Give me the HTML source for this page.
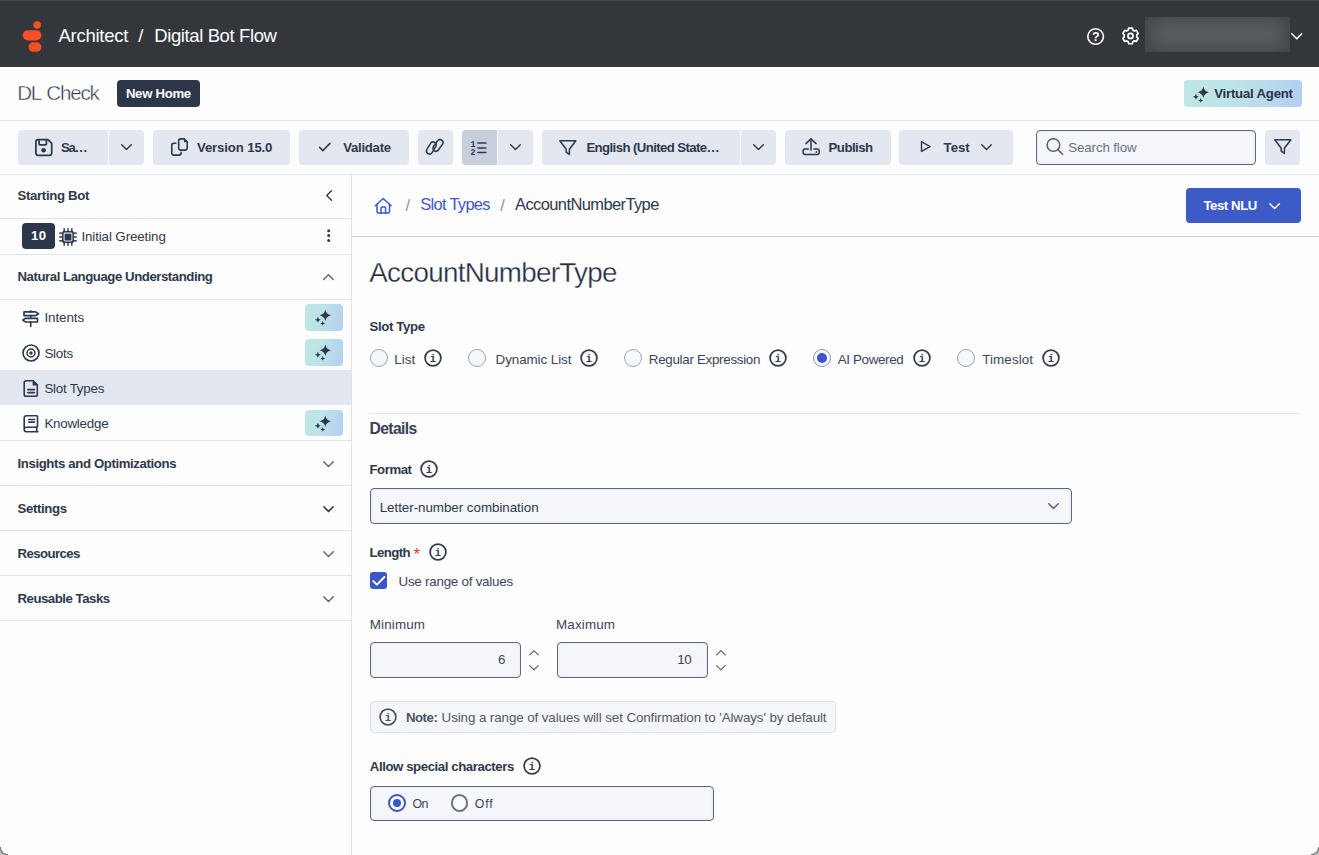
<!DOCTYPE html>
<html lang="en">
<head>
<meta charset="utf-8">
<title>Architect / Digital Bot Flow</title>
<style>
*{box-sizing:border-box;margin:0;padding:0}
html,body{width:1319px;height:855px;overflow:hidden;background:#fdfdfd}
body{font-family:"Liberation Sans",sans-serif;color:#2e394c;font-size:13px;position:relative}
.abs{position:absolute}
.t{position:absolute;white-space:pre;line-height:1}
svg{position:absolute;overflow:visible}
.s{fill:none;stroke:#2e394c;stroke-width:1.5;stroke-linecap:round;stroke-linejoin:round}
.btn{position:absolute;top:130px;height:35px;background:#e3e7f0}
.hl{position:absolute;height:1px;background:#dfe2ed;left:0}
.ai{position:absolute;left:305px;width:38px;height:27px;border-radius:4px;background:linear-gradient(105deg,#bfe7e4 0%,#bde4e6 40%,#b4cef3 100%)}
.radio{position:absolute;width:18px;height:18px;border-radius:50%;border:1px solid #97a3bd;background:#f7f8fa}
.inp{position:absolute;border:1px solid #5d6880;border-radius:4px;background:#f5f6f9;box-shadow:inset 0 0 3px rgba(60,70,100,.10)}
</style>
</head>
<body>
<div class="abs" style="left:0;top:0;width:1319px;height:67px;background:#33373c;border-top:1px solid #484a4a"></div>
<svg style="left:22px;top:20px" width="21" height="33" viewBox="0 0 21 33" ><circle cx="15.2" cy="4.9" r="3.75" fill="#f75028"/><rect x="0.7" y="10.2" width="18.7" height="10.2" rx="5.1" fill="#f75028"/><rect x="6.5" y="22.3" width="12.9" height="9.5" rx="4.75" fill="#f75028"/></svg>
<span class="t" style="left:58.4px;top:27.0px;font-size:18.54px;color:#fdfdfd;letter-spacing:-0.27px">Architect</span>
<span class="t" style="left:138.2px;top:27.0px;font-size:18.54px;color:#fdfdfd;letter-spacing:0.90px">/</span>
<span class="t" style="left:154.2px;top:27.0px;font-size:18.54px;color:#fdfdfd;letter-spacing:-0.40px">Digital Bot Flow</span>
<svg style="left:1086px;top:27px" width="20" height="20" viewBox="0 0 20 20" ><circle cx="9.6" cy="9.5" r="7.8" fill="none" stroke="#fff" stroke-width="1.6"/><text x="9.7" y="14" text-anchor="middle" font-family="Liberation Sans,sans-serif" font-weight="bold" font-size="12.5" fill="#fff">?</text></svg>
<svg style="left:1120px;top:25px" width="22" height="22" viewBox="0 0 22 22" ><path d="M8.69,3.06 L12.31,3.06 L12.78,4.97 L14.50,5.97 L16.39,5.41 L18.20,8.55 L16.77,9.91 L16.77,11.89 L18.20,13.25 L16.39,16.39 L14.50,15.83 L12.78,16.83 L12.31,18.74 L8.69,18.74 L8.22,16.83 L6.50,15.83 L4.61,16.39 L2.80,13.25 L4.23,11.89 L4.23,9.91 L2.80,8.55 L4.61,5.41 L6.50,5.97 L8.22,4.97Z" fill="none" stroke="#fff" stroke-width="1.7" stroke-linejoin="round"/><circle cx="10.5" cy="10.9" r="2.55" fill="none" stroke="#fff" stroke-width="1.7"/></svg>
<div class="abs" style="left:1145px;top:17px;width:145px;height:35px;overflow:hidden;background:#414448"><div class="abs" style="left:6px;top:3px;width:133px;height:29px;background:#585b5f;filter:blur(8px)"></div></div>
<svg style="left:1290.75px;top:32.7px" width="11.5" height="6.6" viewBox="0 0 11.5 6.6" ><polyline points="0.75,0.75 5.75,5.85 10.75,0.75" fill="none" stroke="#fff" stroke-width="1.5" stroke-linecap="round" stroke-linejoin="round"/></svg>
<div class="hl" style="top:120px;width:1319px"></div>
<span class="t" style="left:17.2px;top:83.0px;font-size:20.6px;color:#2c374f;letter-spacing:-1.22px;word-spacing:1.5px;-webkit-text-stroke:0.42px #fdfdfd">DL Check</span>
<div class="abs" style="left:117px;top:80px;width:83px;height:27px;border-radius:4px;background:#2e364a"></div>
<span class="t" style="left:125.9px;top:87.0px;font-size:13.19px;font-weight:bold;color:#ffffff;letter-spacing:-0.30px">New Home</span>
<div class="abs" style="left:1184px;top:80px;width:118px;height:27px;border-radius:4px;background:linear-gradient(100deg,#bfe7e4 0%,#bde4e6 40%,#b4cef3 100%)"></div>
<svg style="left:1192.5px;top:85px" width="18" height="18" viewBox="0 0 18 18" ><path d="M10.3,1.5 Q11.1874,6.412599999999999 16.1,7.3 Q11.1874,8.1874 10.3,13.1 Q9.412600000000001,8.1874 4.500000000000001,7.3 Q9.412600000000001,6.412599999999999 10.3,1.5ZM2.9,8.8 Q3.2239999999999998,11.476 5.9,11.8 Q3.2239999999999998,12.124 2.9,14.8 Q2.576,12.124 -0.10000000000000009,11.8 Q2.576,11.476 2.9,8.8ZM7.7,13.0 Q7.916,15.184000000000001 10.1,15.4 Q7.916,15.616 7.7,17.8 Q7.484,15.616 5.300000000000001,15.4 Q7.484,15.184000000000001 7.7,13.0Z" fill="#2f374b"/></svg>
<span class="t" style="left:1214.2px;top:87.0px;font-size:13.19px;font-weight:bold;color:#2c3348;letter-spacing:-0.21px">Virtual Agent</span>
<div class="hl" style="top:174px;width:1319px"></div>
<div class="btn" style="left:18px;width:90px;border-radius:4px 0 0 4px;background:#e3e7f0"></div>
<div class="btn" style="left:109px;width:35px;border-radius:0 4px 4px 0;background:#e3e7f0"></div>
<div class="btn" style="left:153px;width:137px;border-radius:4px;background:#e3e7f0"></div>
<div class="btn" style="left:299px;width:110px;border-radius:4px;background:#e3e7f0"></div>
<div class="btn" style="left:418px;width:35px;border-radius:4px;background:#e3e7f0"></div>
<div class="btn" style="left:462px;width:35px;border-radius:4px 0 0 4px;background:#c8cedc"></div>
<div class="btn" style="left:498px;width:35px;border-radius:0 4px 4px 0;background:#e3e7f0"></div>
<div class="btn" style="left:542px;width:198px;border-radius:4px 0 0 4px;background:#e3e7f0"></div>
<div class="btn" style="left:741px;width:35px;border-radius:0 4px 4px 0;background:#e3e7f0"></div>
<div class="btn" style="left:785px;width:106px;border-radius:4px;background:#e3e7f0"></div>
<div class="btn" style="left:899px;width:114px;border-radius:4px;background:#e3e7f0"></div>
<div class="btn" style="left:1265px;width:35px;border-radius:4px;background:#e3e7f0"></div>
<svg style="left:34px;top:138px" width="20" height="20" viewBox="0 0 20 20" ><g class="s" style="stroke-width:1.75"><path d="M1.9,3.9 a2.2,2.2 0 0 1 2.2,-2.2 h9.9 l3.7,3.7 v9.7 a2.2,2.2 0 0 1 -2.2,2.2 h-11.4 a2.2,2.2 0 0 1 -2.2,-2.2 Z"/><path d="M5.1,1.7 v4.3 a0.8,0.8 0 0 0 .8,.8 h5.7 a.8,.8 0 0 0 .8,-.8 v-4.3"/></g><circle cx="9.6" cy="12.2" r="2.3" fill="#2e394c"/></svg>
<span class="t" style="left:61.0px;top:141.0px;font-size:13.19px;font-weight:bold;color:#2e394c;letter-spacing:-1.30px">Sa…</span>
<svg style="left:121.3px;top:144.3px" width="11" height="6.2" viewBox="0 0 11 6.2" ><polyline points="0.7,0.7 5.5,5.5 10.3,0.7" fill="none" stroke="#2e394c" stroke-width="1.4" stroke-linecap="round" stroke-linejoin="round"/></svg>
<svg style="left:170px;top:137px" width="20" height="20" viewBox="0 0 20 20" ><g class="s" style="stroke-width:1.6"><path d="M8.7,3.9 a2,2 0 0 1 2,-2 h3.5 l3,3 v6.2 a2,2 0 0 1 -2,2 h-4.5 a2,2 0 0 1 -2,-2 Z"/><path d="M5.9,6.3 h-2.1 a2,2 0 0 0 -2,2 v7.8 a2,2 0 0 0 2,2 h5.3 a2,2 0 0 0 2,-2 v-0.9"/></g><path d="M13.9,1.9 l3.3,3.3 h-3.3Z" fill="#2e394c"/></svg>
<span class="t" style="left:197.0px;top:141.0px;font-size:13.19px;font-weight:bold;color:#2e394c;letter-spacing:-0.14px">Version 15.0</span>
<svg style="left:318px;top:142px" width="14" height="10" viewBox="0 0 14 10" ><polyline class="s" points="1.6,5.4 4.8,8.6 12,1.4"/></svg>
<span class="t" style="left:343.2px;top:141.0px;font-size:13.19px;font-weight:bold;color:#2e394c;letter-spacing:-0.27px">Validate</span>
<svg style="left:425px;top:138px" width="20" height="20" viewBox="0 0 20 20" ><g class="s"><rect x="-0.2" y="7" width="13" height="6" rx="3" transform="rotate(-59 6.3 10)"/><rect x="6.5" y="4.35" width="13" height="6" rx="3" transform="rotate(-54 13 7.35)"/></g></svg>
<svg style="left:470px;top:140px" width="18" height="16" viewBox="0 0 18 16" ><g class="s"><line x1="7.9" y1="3.1" x2="15.8" y2="3.1"/><line x1="7.9" y1="7.9" x2="15.8" y2="7.9"/><line x1="7.9" y1="12.6" x2="15.8" y2="12.6"/></g><text x="0.6" y="6.5" font-family="Liberation Mono,monospace" font-weight="bold" font-size="8.4" fill="#2e394c">1</text><text x="0.6" y="14.6" font-family="Liberation Mono,monospace" font-weight="bold" font-size="8.4" fill="#2e394c">2</text></svg>
<svg style="left:510.4px;top:144.3px" width="11" height="6.2" viewBox="0 0 11 6.2" ><polyline points="0.7,0.7 5.5,5.5 10.3,0.7" fill="none" stroke="#2e394c" stroke-width="1.4" stroke-linecap="round" stroke-linejoin="round"/></svg>
<svg style="left:559px;top:140px" width="18" height="16" viewBox="0 0 18 16" ><path class="s" d="M0.8,0.8 H16.8 L10.4,9.2 V14.4 L7.2,12.2 V9.2 Z"/></svg>
<span class="t" style="left:586.4px;top:141.0px;font-size:13.19px;font-weight:bold;color:#2e394c;letter-spacing:-0.59px">English (United State…</span>
<svg style="left:752.5px;top:144.3px" width="11" height="6.2" viewBox="0 0 11 6.2" ><polyline points="0.7,0.7 5.5,5.5 10.3,0.7" fill="none" stroke="#2e394c" stroke-width="1.4" stroke-linecap="round" stroke-linejoin="round"/></svg>
<svg style="left:801.6px;top:138px" width="18" height="18" viewBox="0 0 18 18" ><g class="s"><path d="M9,12 V1.1"/><path d="M3.9,5.6 L9,0.9 L14.1,5.6"/><path d="M6.4,11.1 H3.1 a2,2 0 0 0 -2,2 v1.5 a2,2 0 0 0 2,2 h12.1 a2,2 0 0 0 2,-2 v-1.5 a2,2 0 0 0 -2,-2 h-3.3"/></g><circle cx="14.4" cy="13.9" r="0.85" fill="#2e394c"/></svg>
<span class="t" style="left:828.6px;top:141.0px;font-size:13.19px;font-weight:bold;color:#2e394c;letter-spacing:-0.52px">Publish</span>
<svg style="left:920px;top:140px" width="12" height="14" viewBox="0 0 12 14" ><path class="s" style="stroke-width:1.4" d="M1.5,1.7 L10,6.55 L1.5,11.4 Z"/></svg>
<span class="t" style="left:943.6px;top:141.0px;font-size:13.19px;font-weight:bold;color:#2e394c;letter-spacing:-0.01px">Test</span>
<svg style="left:981.4px;top:144.3px" width="11" height="6.2" viewBox="0 0 11 6.2" ><polyline points="0.7,0.7 5.5,5.5 10.3,0.7" fill="none" stroke="#2e394c" stroke-width="1.4" stroke-linecap="round" stroke-linejoin="round"/></svg>
<div class="inp" style="left:1036px;top:130px;width:220px;height:35px"></div>
<svg style="left:1046px;top:138px" width="18" height="18" viewBox="0 0 18 18" ><circle cx="7.4" cy="7.0" r="6.3" fill="none" stroke="#566074" stroke-width="1.5"/><line x1="11.9" y1="11.6" x2="16.6" y2="16.3" stroke="#566074" stroke-width="1.5" stroke-linecap="round"/></svg>
<span class="t" style="left:1068.3px;top:141.0px;font-size:13.39px;color:#687286;letter-spacing:-0.16px">Search flow</span>
<svg style="left:1273.9px;top:139.3px" width="18" height="16" viewBox="0 0 18 16" ><path class="s" d="M0.8,0.8 H16.8 L10.4,9.2 V14.4 L7.2,12.2 V9.2 Z"/></svg>
<div class="abs" style="left:351px;top:175px;width:1px;height:680px;background:#dfe2ed"></div>
<div class="hl" style="top:218px;width:351px"></div>
<div class="hl" style="top:254px;width:351px"></div>
<div class="hl" style="top:299px;width:351px"></div>
<div class="hl" style="top:440px;width:351px"></div>
<div class="hl" style="top:485px;width:351px"></div>
<div class="hl" style="top:530px;width:351px"></div>
<div class="hl" style="top:575px;width:351px"></div>
<div class="hl" style="top:620px;width:351px"></div>
<span class="t" style="left:17.5px;top:189.0px;font-size:13.19px;font-weight:bold;color:#2e394c;letter-spacing:-0.33px">Starting Bot</span>
<svg style="left:325.7px;top:190.2px" width="6.2" height="11" viewBox="0 0 6.2 11" ><polyline points="5.5,0.7 0.7,5.5 5.5,10.3" fill="none" stroke="#2e394c" stroke-width="1.4" stroke-linecap="round" stroke-linejoin="round"/></svg>
<div class="abs" style="left:22px;top:223px;width:33px;height:26px;border-radius:4px;background:#2e364a"></div>
<span class="t" style="left:31.0px;top:229.0px;font-size:13.19px;font-weight:bold;color:#ffffff;letter-spacing:0.33px">10</span>
<svg style="left:58.7px;top:227.7px" width="18" height="18" viewBox="0 0 18 18" ><g stroke="#2e394c" stroke-width="1.5"><line x1="5.2" y1="0.2" x2="5.2" y2="3.4"/><line x1="5.2" y1="14.6" x2="5.2" y2="17.8"/><line x1="0.2" y1="5.2" x2="3.4" y2="5.2"/><line x1="14.6" y1="5.2" x2="17.8" y2="5.2"/><line x1="9" y1="0.2" x2="9" y2="3.4"/><line x1="9" y1="14.6" x2="9" y2="17.8"/><line x1="0.2" y1="9" x2="3.4" y2="9"/><line x1="14.6" y1="9" x2="17.8" y2="9"/><line x1="12.8" y1="0.2" x2="12.8" y2="3.4"/><line x1="12.8" y1="14.6" x2="12.8" y2="17.8"/><line x1="0.2" y1="12.8" x2="3.4" y2="12.8"/><line x1="14.6" y1="12.8" x2="17.8" y2="12.8"/></g><rect x="3.05" y="3.05" width="11.9" height="11.9" rx="1.6" fill="#2e394c"/><rect x="5.1" y="5.1" width="7.8" height="7.8" rx="0.8" fill="none" stroke="#dfe2ea" stroke-width="1.05"/></svg>
<span class="t" style="left:81.4px;top:230.0px;font-size:13.39px;color:#2e394c;letter-spacing:-0.12px">Initial Greeting</span>
<svg style="left:326px;top:228px" width="6" height="16" viewBox="0 0 6 16"><circle cx="2.7" cy="2.8" r="1.5" fill="#2e394c"/><circle cx="2.7" cy="7.6" r="1.5" fill="#2e394c"/><circle cx="2.7" cy="12.4" r="1.5" fill="#2e394c"/></svg>
<span class="t" style="left:17.5px;top:270.0px;font-size:13.19px;font-weight:bold;color:#2e394c;letter-spacing:-0.44px">Natural Language Understanding</span>
<svg style="left:323.2px;top:273.9px" width="11" height="6.2" viewBox="0 0 11 6.2" ><polyline points="0.7,5.5 5.5,0.7 10.3,5.5" fill="none" stroke="#5b6578" stroke-width="1.4" stroke-linecap="round" stroke-linejoin="round"/></svg>
<div class="abs" style="left:0;top:370px;width:351px;height:35px;background:#e3e7f0"></div>
<svg style="left:21px;top:309px" width="19" height="19" viewBox="0 0 19 19" ><g class="s" style="stroke-width:1.65"><path d="M3,2.9 h11.6 l2.9,1.85 l-2.9,1.85 h-11.6 Z"/><path d="M16.5,9.3 h-11.9 l-2.9,1.85 l2.9,1.85 h11.9 Z"/><line x1="9.7" y1="1.7" x2="9.7" y2="2.9"/><line x1="9.7" y1="6.6" x2="9.7" y2="9.3"/><line x1="9.7" y1="13" x2="9.7" y2="17.4"/></g></svg>
<span class="t" style="left:44.4px;top:311.0px;font-size:13.39px;color:#2e394c;letter-spacing:-0.06px">Intents</span>
<svg style="left:21.9px;top:344.3px" width="18" height="18" viewBox="0 0 18 18" ><circle cx="9" cy="9" r="8.0" fill="none" stroke="#2e394c" stroke-width="1.65"/><circle cx="9" cy="9" r="3.95" fill="none" stroke="#2e394c" stroke-width="1.5"/><circle cx="9" cy="9" r="1.7" fill="#2e394c"/></svg>
<span class="t" style="left:44.4px;top:347.0px;font-size:13.39px;color:#2e394c;letter-spacing:-0.24px">Slots</span>
<svg style="left:22px;top:379px" width="18" height="19" viewBox="0 0 18 19" ><g class="s" style="stroke-width:1.6"><path d="M2.2,3.6 a1.8,1.8 0 0 1 1.8,-1.8 h7.2 l4.1,4.1 v9.5 a1.8,1.8 0 0 1 -1.8,1.8 h-9.5 a1.8,1.8 0 0 1 -1.8,-1.8 Z"/><line x1="5.8" y1="10.6" x2="12.4" y2="10.6"/><line x1="5.8" y1="13.6" x2="12.4" y2="13.6"/></g><path d="M10.6,1.8 h0.6 l4.1,4.1 v0.6 h-4.7Z" fill="#2e394c"/></svg>
<span class="t" style="left:44.4px;top:382.0px;font-size:13.39px;color:#2e394c;letter-spacing:-0.25px">Slot Types</span>
<svg style="left:22px;top:414px" width="18" height="19" viewBox="0 0 18 19" ><g class="s" style="stroke-width:1.6"><path d="M2.2,15.5 V3.8 a2,2 0 0 1 2,-2 H14.5 a1,1 0 0 1 1,1 V12.3 a1,1 0 0 1 -1,1 H4.4 a2.2,2.2 0 0 0 0,4.4 H15.9"/><line x1="14.7" y1="13.4" x2="14.7" y2="17.6"/><line x1="6.8" y1="5.5" x2="12.5" y2="5.5"/><line x1="6.8" y1="8.1" x2="12.5" y2="8.1"/></g></svg>
<span class="t" style="left:44.4px;top:417.0px;font-size:13.39px;color:#2e394c;letter-spacing:-0.25px">Knowledge</span>
<div class="ai" style="top:304px;height:27px"></div>
<svg style="left:314.5px;top:308.0px" width="18" height="18" viewBox="0 0 18 18" ><path d="M10.3,1.5 Q11.1874,6.412599999999999 16.1,7.3 Q11.1874,8.1874 10.3,13.1 Q9.412600000000001,8.1874 4.500000000000001,7.3 Q9.412600000000001,6.412599999999999 10.3,1.5ZM2.9,8.8 Q3.2239999999999998,11.476 5.9,11.8 Q3.2239999999999998,12.124 2.9,14.8 Q2.576,12.124 -0.10000000000000009,11.8 Q2.576,11.476 2.9,8.8ZM7.7,13.0 Q7.916,15.184000000000001 10.1,15.4 Q7.916,15.616 7.7,17.8 Q7.484,15.616 5.300000000000001,15.4 Q7.484,15.184000000000001 7.7,13.0Z" fill="#2f374b"/></svg>
<div class="ai" style="top:339px;height:27px"></div>
<svg style="left:314.5px;top:343.0px" width="18" height="18" viewBox="0 0 18 18" ><path d="M10.3,1.5 Q11.1874,6.412599999999999 16.1,7.3 Q11.1874,8.1874 10.3,13.1 Q9.412600000000001,8.1874 4.500000000000001,7.3 Q9.412600000000001,6.412599999999999 10.3,1.5ZM2.9,8.8 Q3.2239999999999998,11.476 5.9,11.8 Q3.2239999999999998,12.124 2.9,14.8 Q2.576,12.124 -0.10000000000000009,11.8 Q2.576,11.476 2.9,8.8ZM7.7,13.0 Q7.916,15.184000000000001 10.1,15.4 Q7.916,15.616 7.7,17.8 Q7.484,15.616 5.300000000000001,15.4 Q7.484,15.184000000000001 7.7,13.0Z" fill="#2f374b"/></svg>
<div class="ai" style="top:410px;height:26px"></div>
<svg style="left:314.5px;top:414.0px" width="18" height="18" viewBox="0 0 18 18" ><path d="M10.3,1.5 Q11.1874,6.412599999999999 16.1,7.3 Q11.1874,8.1874 10.3,13.1 Q9.412600000000001,8.1874 4.500000000000001,7.3 Q9.412600000000001,6.412599999999999 10.3,1.5ZM2.9,8.8 Q3.2239999999999998,11.476 5.9,11.8 Q3.2239999999999998,12.124 2.9,14.8 Q2.576,12.124 -0.10000000000000009,11.8 Q2.576,11.476 2.9,8.8ZM7.7,13.0 Q7.916,15.184000000000001 10.1,15.4 Q7.916,15.616 7.7,17.8 Q7.484,15.616 5.300000000000001,15.4 Q7.484,15.184000000000001 7.7,13.0Z" fill="#2f374b"/></svg>
<span class="t" style="left:17.5px;top:457.0px;font-size:13.19px;font-weight:bold;color:#2e394c;letter-spacing:-0.38px">Insights and Optimizations</span>
<span class="t" style="left:17.5px;top:502.0px;font-size:13.19px;font-weight:bold;color:#2e394c;letter-spacing:-0.36px">Settings</span>
<span class="t" style="left:17.5px;top:547.0px;font-size:13.19px;font-weight:bold;color:#2e394c;letter-spacing:-0.58px">Resources</span>
<span class="t" style="left:17.5px;top:592.0px;font-size:13.19px;font-weight:bold;color:#2e394c;letter-spacing:-0.47px">Reusable Tasks</span>
<svg style="left:323.2px;top:460.7px" width="11" height="6.2" viewBox="0 0 11 6.2" ><polyline points="0.7,0.7 5.5,5.5 10.3,0.7" fill="none" stroke="#5b6578" stroke-width="1.4" stroke-linecap="round" stroke-linejoin="round"/></svg>
<svg style="left:323.2px;top:505.5px" width="11" height="6.2" viewBox="0 0 11 6.2" ><polyline points="0.8,0.8 5.5,5.4 10.2,0.8" fill="none" stroke="#2e394c" stroke-width="1.6" stroke-linecap="round" stroke-linejoin="round"/></svg>
<svg style="left:323.2px;top:550.7px" width="11" height="6.2" viewBox="0 0 11 6.2" ><polyline points="0.7,0.7 5.5,5.5 10.3,0.7" fill="none" stroke="#5b6578" stroke-width="1.4" stroke-linecap="round" stroke-linejoin="round"/></svg>
<svg style="left:323.2px;top:595.8px" width="11" height="6.2" viewBox="0 0 11 6.2" ><polyline points="0.7,0.7 5.5,5.5 10.3,0.7" fill="none" stroke="#5b6578" stroke-width="1.4" stroke-linecap="round" stroke-linejoin="round"/></svg>
<div class="abs" style="left:352px;top:236px;width:967px;height:1px;background:#c9d0dc"></div>
<svg style="left:373.6px;top:196.6px" width="19" height="18" viewBox="0 0 19 18" ><g fill="none" stroke="#3b56c5" stroke-width="1.5" stroke-linecap="round" stroke-linejoin="round"><path d="M1.3,8.8 L9.2,1.5 L17.1,8.8"/><path d="M3.0,7.2 V14.4 a1.6,1.6 0 0 0 1.6,1.6 h9.3 a1.6,1.6 0 0 0 1.6,-1.6 V7.2"/><path d="M7.1,16 V10.9 a.8,.8 0 0 1 .8,-.8 h2.9 a.8,.8 0 0 1 .8,.8 V16"/></g></svg>
<span class="t" style="left:405.5px;top:197.0px;font-size:16.48px;color:#8a93a5;letter-spacing:0.90px">/</span>
<span class="t" style="left:420.2px;top:196.0px;font-size:16.48px;color:#3f58c6;letter-spacing:-0.69px">Slot Types</span>
<span class="t" style="left:500.3px;top:197.0px;font-size:16.48px;color:#8a93a5;letter-spacing:0.90px">/</span>
<span class="t" style="left:515.0px;top:196.0px;font-size:16.48px;color:#2e394c;letter-spacing:-0.59px">AccountNumberType</span>
<div class="abs" style="left:1186px;top:188px;width:115px;height:35px;border-radius:4px;background:#3c5bc6"></div>
<span class="t" style="left:1203.4px;top:199.0px;font-size:13.19px;font-weight:bold;color:#ffffff;letter-spacing:-0.43px">Test NLU</span>
<svg style="left:1269.1px;top:202.7px" width="11.2" height="6.2" viewBox="0 0 11.2 6.2" ><polyline points="0.75,0.75 5.6,5.45 10.45,0.75" fill="none" stroke="#fff" stroke-width="1.5" stroke-linecap="round" stroke-linejoin="round"/></svg>
<span class="t" style="left:369.2px;top:259.0px;font-size:27.81px;color:#242d42;letter-spacing:-0.71px;-webkit-text-stroke:0.3px #fdfdfd">AccountNumberType</span>
<span class="t" style="left:369.5px;top:320.0px;font-size:13.19px;font-weight:bold;color:#2e394c;letter-spacing:-0.36px">Slot Type</span>
<div class="radio" style="left:369.6px;top:349px"></div>
<span class="t" style="left:394.2px;top:353.0px;font-size:13.39px;color:#3b4559;letter-spacing:0.09px">List</span>
<svg style="left:424px;top:348.6px" width="18" height="18" viewBox="0 0 18 18" ><circle cx="9" cy="9" r="7.9" fill="none" stroke="#343b4b" stroke-width="1.75"/><text x="9" y="13.1" text-anchor="middle" font-family="Liberation Mono,monospace" font-weight="bold" font-size="10.5" fill="#343b4b">i</text></svg>
<div class="radio" style="left:468px;top:349px"></div>
<span class="t" style="left:495.6px;top:353.0px;font-size:13.39px;color:#3b4559;letter-spacing:-0.07px">Dynamic List</span>
<svg style="left:580px;top:348.6px" width="18" height="18" viewBox="0 0 18 18" ><circle cx="9" cy="9" r="7.9" fill="none" stroke="#343b4b" stroke-width="1.75"/><text x="9" y="13.1" text-anchor="middle" font-family="Liberation Mono,monospace" font-weight="bold" font-size="10.5" fill="#343b4b">i</text></svg>
<div class="radio" style="left:624px;top:349px"></div>
<span class="t" style="left:648.8px;top:353.0px;font-size:13.39px;color:#3b4559;letter-spacing:-0.30px">Regular Expression</span>
<svg style="left:768.7px;top:348.6px" width="18" height="18" viewBox="0 0 18 18" ><circle cx="9" cy="9" r="7.9" fill="none" stroke="#343b4b" stroke-width="1.75"/><text x="9" y="13.1" text-anchor="middle" font-family="Liberation Mono,monospace" font-weight="bold" font-size="10.5" fill="#343b4b">i</text></svg>
<div class="radio" style="left:813px;top:349px;border-color:#8593bd"></div><div class="abs" style="left:817px;top:353px;width:10px;height:10px;border-radius:50%;background:#3b56c5"></div>
<span class="t" style="left:837.7px;top:353.0px;font-size:13.39px;color:#3b4559;letter-spacing:-0.34px">AI Powered</span>
<svg style="left:912.8px;top:348.6px" width="18" height="18" viewBox="0 0 18 18" ><circle cx="9" cy="9" r="7.9" fill="none" stroke="#343b4b" stroke-width="1.75"/><text x="9" y="13.1" text-anchor="middle" font-family="Liberation Mono,monospace" font-weight="bold" font-size="10.5" fill="#343b4b">i</text></svg>
<div class="radio" style="left:957px;top:349px"></div>
<span class="t" style="left:982.3px;top:353.0px;font-size:13.39px;color:#3b4559;letter-spacing:0.09px">Timeslot</span>
<svg style="left:1041.6px;top:348.6px" width="18" height="18" viewBox="0 0 18 18" ><circle cx="9" cy="9" r="7.9" fill="none" stroke="#343b4b" stroke-width="1.75"/><text x="9" y="13.1" text-anchor="middle" font-family="Liberation Mono,monospace" font-weight="bold" font-size="10.5" fill="#343b4b">i</text></svg>
<div class="abs" style="left:370px;top:413px;width:931px;height:1px;background:#e6e8ef"></div>
<span class="t" style="left:369.5px;top:421.0px;font-size:15.73px;font-weight:bold;color:#384257;letter-spacing:-0.62px">Details</span>
<span class="t" style="left:369.5px;top:463.0px;font-size:13.19px;font-weight:bold;color:#2e394c;letter-spacing:-0.44px">Format</span>
<svg style="left:420.4px;top:460.1px" width="18" height="18" viewBox="0 0 18 18" ><circle cx="9" cy="9" r="7.9" fill="none" stroke="#343b4b" stroke-width="1.75"/><text x="9" y="13.1" text-anchor="middle" font-family="Liberation Mono,monospace" font-weight="bold" font-size="10.5" fill="#343b4b">i</text></svg>
<div class="inp" style="left:370px;top:488px;width:702px;height:36px"></div>
<span class="t" style="left:379.7px;top:501.0px;font-size:13.39px;color:#2e394c;letter-spacing:-0.04px">Letter-number combination</span>
<svg style="left:1048.3px;top:502.55px" width="11" height="6.3" viewBox="0 0 11 6.3" ><polyline points="0.75,0.75 5.5,5.55 10.25,0.75" fill="none" stroke="#5b6578" stroke-width="1.5" stroke-linecap="round" stroke-linejoin="round"/></svg>
<span class="t" style="left:369.5px;top:546.0px;font-size:13.19px;font-weight:bold;color:#2e394c;letter-spacing:-0.59px">Length</span>
<span class="t" style="left:413.6px;top:546.0px;font-size:17.0px;color:#e5402f;letter-spacing:0.00px">*</span>
<svg style="left:428.6px;top:542.9px" width="18" height="18" viewBox="0 0 18 18" ><circle cx="9" cy="9" r="7.9" fill="none" stroke="#343b4b" stroke-width="1.75"/><text x="9" y="13.1" text-anchor="middle" font-family="Liberation Mono,monospace" font-weight="bold" font-size="10.5" fill="#343b4b">i</text></svg>
<div class="abs" style="left:370px;top:572px;width:17px;height:17px;border-radius:3px;background:#3b56c5"></div>
<svg style="left:370px;top:572px" width="17" height="17" viewBox="0 0 17 17" ><polyline points="3.2,9.1 6.9,12.6 14.4,5.0" fill="none" stroke="#fff" stroke-width="1.9" stroke-linecap="round" stroke-linejoin="round"/></svg>
<span class="t" style="left:398.5px;top:575.0px;font-size:13.39px;color:#3b4559;letter-spacing:-0.24px">Use range of values</span>
<span class="t" style="left:369.8px;top:618.0px;font-size:13.39px;color:#3b4559;letter-spacing:0.14px">Minimum</span>
<span class="t" style="left:556.0px;top:618.0px;font-size:13.39px;color:#3b4559;letter-spacing:0.17px">Maximum</span>
<div class="inp" style="left:370px;top:642px;width:151px;height:36px"></div>
<div class="inp" style="left:557px;top:642px;width:151px;height:36px"></div>
<span class="t" style="left:498.0px;top:653.0px;font-size:13.39px;color:#3b4559;letter-spacing:0.00px">6</span>
<span class="t" style="left:677.2px;top:653.0px;font-size:13.39px;color:#3b4559;letter-spacing:-0.29px">10</span>
<svg style="left:528.9px;top:650.05px" width="9.8" height="5.5" viewBox="0 0 9.8 5.5" ><polyline points="0.625,4.875 4.9,0.625 9.175,4.875" fill="none" stroke="#5b6578" stroke-width="1.25" stroke-linecap="round" stroke-linejoin="round"/></svg>
<svg style="left:528.9px;top:664.85px" width="9.8" height="5.5" viewBox="0 0 9.8 5.5" ><polyline points="0.625,0.625 4.9,4.875 9.175,0.625" fill="none" stroke="#5b6578" stroke-width="1.25" stroke-linecap="round" stroke-linejoin="round"/></svg>
<svg style="left:715.8px;top:650.05px" width="9.8" height="5.5" viewBox="0 0 9.8 5.5" ><polyline points="0.625,4.875 4.9,0.625 9.175,4.875" fill="none" stroke="#5b6578" stroke-width="1.25" stroke-linecap="round" stroke-linejoin="round"/></svg>
<svg style="left:715.8px;top:664.85px" width="9.8" height="5.5" viewBox="0 0 9.8 5.5" ><polyline points="0.625,0.625 4.9,4.875 9.175,0.625" fill="none" stroke="#5b6578" stroke-width="1.25" stroke-linecap="round" stroke-linejoin="round"/></svg>
<div class="abs" style="left:370px;top:701px;width:466px;height:32px;border-radius:4px;background:#f5f6f9;border:1px solid #dde1ec"></div>
<svg style="left:378.6px;top:708.2px" width="18" height="18" viewBox="0 0 18 18" ><circle cx="9" cy="9" r="7.9" fill="none" stroke="#4a5468" stroke-width="1.75"/><text x="9" y="13.1" text-anchor="middle" font-family="Liberation Mono,monospace" font-weight="bold" font-size="10.5" fill="#4a5468">i</text></svg>
<span class="t" style="left:405.9px;top:711.0px;font-size:13.19px;font-weight:bold;color:#4a5468;letter-spacing:-0.43px">Note:</span>
<span class="t" style="left:441.6px;top:711.0px;font-size:13.39px;color:#4f596d;letter-spacing:-0.10px">Using a range of values will set Confirmation to &#x27;Always&#x27; by default</span>
<span class="t" style="left:369.8px;top:760.0px;font-size:13.19px;font-weight:bold;color:#2e394c;letter-spacing:-0.41px">Allow special characters</span>
<svg style="left:523px;top:757.4px" width="18" height="18" viewBox="0 0 18 18" ><circle cx="9" cy="9" r="7.9" fill="none" stroke="#343b4b" stroke-width="1.75"/><text x="9" y="13.1" text-anchor="middle" font-family="Liberation Mono,monospace" font-weight="bold" font-size="10.5" fill="#343b4b">i</text></svg>
<div class="inp" style="left:370px;top:786px;width:344px;height:35px"></div>
<div class="abs" style="left:388px;top:794px;width:18px;height:18px;border-radius:50%;border:2px solid #3b56c5;background:#fbfbfd"></div><div class="abs" style="left:392.8px;top:798.8px;width:8.4px;height:8.4px;border-radius:50%;background:#3b56c5"></div>
<span class="t" style="left:412.5px;top:798.0px;font-size:12.36px;color:#3b4559;letter-spacing:-0.50px">On</span>
<div class="abs" style="left:450.8px;top:794.2px;width:17.4px;height:17.6px;border-radius:50%;border:2px solid #6b7486;background:#fbfbfd"></div>
<span class="t" style="left:474.7px;top:798.0px;font-size:12.36px;color:#3b4559;letter-spacing:0.90px">Off</span>
<div class="abs" style="left:0;top:847px;width:8px;height:8px;background:radial-gradient(circle at 100% 0,rgba(0,0,0,0) 6.5px,#777 7.5px,#bbb 9px)"></div>
<div class="abs" style="left:1311px;top:847px;width:8px;height:8px;background:radial-gradient(circle at 0 0,rgba(0,0,0,0) 6.5px,#777 7.5px,#bbb 9px)"></div>
</body>
</html>
